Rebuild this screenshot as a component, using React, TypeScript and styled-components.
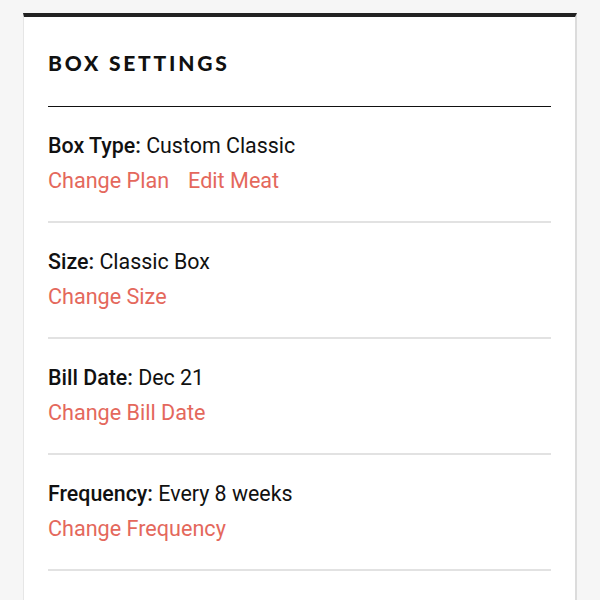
import React from "react";
import styled, { createGlobalStyle } from "styled-components";

const Global = createGlobalStyle`
  html, body { margin: 0; padding: 0; background: #f6f6f6; }
  body { font-family: "Roboto", "Liberation Sans", sans-serif; }
`;

const Page = styled.div`
  padding: 13px 23px 0 23px;
  width: 600px;
  height: 600px;
  box-sizing: border-box;
  overflow: hidden;
`;

const Card = styled.section`
  background: #fff;
  border-top: 4px solid #222;
  border-right: 2px solid #dcdcdc;
  border-left: 1px solid #e6e6e6;
  padding: 0 24px 0 24px;
  min-height: 600px;
`;

const Title = styled.h2`
  margin: 0;
  padding: 34px 0 31px;
  font-family: "Lato", "Liberation Sans", sans-serif;
  font-weight: 900;
  font-size: 21px;
  letter-spacing: 2.8px;
  color: #111;
  line-height: 24px;
  border-bottom: 1.5px solid #111;
`;

const Row = styled.div`
  display: flex;
  flex-direction: column;
  gap: 9px;
  padding: 26px 0 27px;
  border-bottom: 2px solid #e2e2e2;
`;

const Line = styled.div`
  font-size: 21.4px;
  line-height: 26px;
  color: #111;
`;

const Label = styled.span`
  font-weight: 500;
`;

const Links = styled.div`
  display: flex;
  gap: 19px;
`;

const Link = styled.a`
  font-size: 21.6px;
  line-height: 26px;
  color: #e4685c;
  text-decoration: none;
  cursor: pointer;
`;

const rows = [
  { label: "Box Type:", value: "Custom Classic", links: ["Change Plan", "Edit Meat"] },
  { label: "Size:", value: "Classic Box", links: ["Change Size"] },
  { label: "Bill Date:", value: "Dec 21", links: ["Change Bill Date"] },
  { label: "Frequency:", value: "Every 8 weeks", links: ["Change Frequency"] },
];

export default function App() {
  return (
    <>
      <Global />
      <Page>
        <Card>
          <Title>BOX SETTINGS</Title>
          {rows.map((r) => (
            <Row key={r.label}>
              <Line>
                <Label>{r.label}</Label> {r.value}
              </Line>
              <Links>
                {r.links.map((l) => (
                  <Link key={l}>{l}</Link>
                ))}
              </Links>
            </Row>
          ))}
        </Card>
      </Page>
    </>
  );
}
